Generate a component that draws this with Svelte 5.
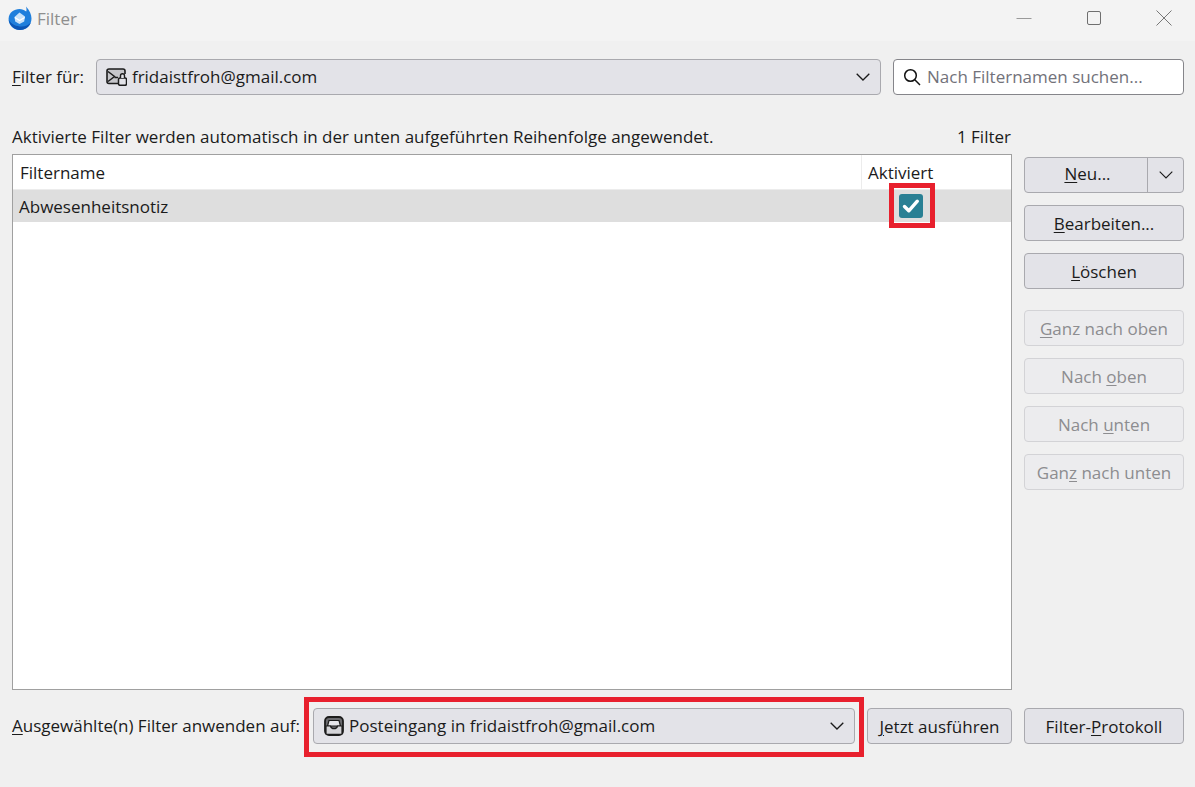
<script>
  const sideTop = [
    { pre: "", key: "B", post: "earbeiten..." },
    { pre: "", key: "L", post: "öschen" },
  ];
  const sideMove = [
    { pre: "", key: "G", post: "anz nach oben" },
    { pre: "Nach ", key: "o", post: "ben" },
    { pre: "Nach ", key: "u", post: "nten" },
    { pre: "Gan", key: "z", post: " nach unten" },
  ];
</script>

<div class="window">
  <header class="titlebar">
    <svg class="logo" viewBox="0 0 24 24" width="24" height="24">
      <path fill="#1f7fdc" d="M11.500 3C6 3 1 6.500.6 12.500.2 18.500 5 24 12 24c6.500 0 11.500-5 11.500-11.500 0-4-1.800-8-5.500-12 .6 2 .7 3.600.2 5C16.300 4 14 3 11.500 3z"/>
      <path fill="#0b55b5" d="M.8 14c.8 5.500 5.300 10 11.200 10 5 0 9.400-3 10.800-7.500-2.300 2.600-5.500 4-9.300 4C8.500 20.500 3.500 18.500.8 14z"/>
      <path fill="#c9e3fa" d="M6.500 11 11.500 6.500l5.500 4-.8 5L11.500 18l-4.300-2.500z"/>
      <path fill="none" stroke="#fff" stroke-width="1.300" d="M6.800 11.500l4.700 3 5.200-3"/>
    </svg>
    <span class="title">Filter</span>
    <div class="controls">
      <svg viewBox="0 0 16 16" width="16" height="16"><path d="M.5 8.500h15" stroke="#9a9a9a" fill="none"/></svg>
      <svg viewBox="0 0 16 16" width="16" height="16"><rect x="1.500" y="1.500" width="13" height="13" rx="1.500" stroke="#6f6f6f" fill="none"/></svg>
      <svg viewBox="0 0 16 16" width="16" height="16"><path d="M.5.500l15 15M15.500.500l-15 15" stroke="#777" fill="none"/></svg>
    </div>
  </header>

  <div class="top-row">
    <span class="label"><u>F</u>ilter für:</span>
    <div class="select account">
      <svg class="row-icon" viewBox="0 0 21 18" width="21" height="18">
        <path d="M12 15.500H3A2 2 0 0 1 1 13.500V3A2 2 0 0 1 3 1h14A2 2 0 0 1 19 3v3" fill="#c6c6ca" stroke="#1c1c1c" stroke-width="1.600"/>
        <path d="M2 3.500l6.500 5L2 13.500" fill="none" stroke="#1c1c1c" stroke-width="1.500"/>
        <path d="M8.500 9.500h3.500" stroke="#1c1c1c" stroke-width="1.500"/>
        <rect x="12.500" y="10" width="8" height="7.300" rx="1.500" fill="#e3e3e8" stroke="#1c1c1c" stroke-width="1.500"/>
        <path d="M14.500 10V7.800a2 2 0 0 1 4 0V10" fill="#e3e3e8" stroke="#1c1c1c" stroke-width="1.400"/>
      </svg>
      <span class="grow">fridaistfroh@gmail.com</span>
      <svg class="chev" viewBox="0 0 14 8" width="14" height="8"><path d="M.7.700 7 7l6.300-6.300" fill="none" stroke="#1a1a1a" stroke-width="1.300"/></svg>
    </div>
    <div class="search">
      <svg viewBox="0 0 18 18" width="18" height="18"><circle cx="7.500" cy="7.500" r="5.800" fill="none" stroke="#111" stroke-width="1.500"/><path d="M11.800 11.800 17 17" stroke="#111" stroke-width="1.500"/></svg>
      <span class="placeholder">Nach Filternamen suchen...</span>
    </div>
  </div>

  <div class="info-row">
    <span>Aktivierte Filter werden automatisch in der unten aufgeführten Reihenfolge angewendet.</span>
    <span>1 Filter</span>
  </div>

  <div class="main">
    <div class="tree">
      <div class="tree-head">
        <div class="col-name">Filtername</div>
        <div class="col-on">Aktiviert</div>
      </div>
      <div class="tree-row">
        <div class="name">Abwesenheitsnotiz</div>
        <div class="check-cell">
          <span class="checkbox">
            <svg viewBox="0 0 24 24" width="24" height="24"><path d="M5.500 12.500l4.300 4.300 8.500-9.600" fill="none" stroke="#fff" stroke-width="3.400" stroke-linecap="round" stroke-linejoin="round"/></svg>
          </span>
          <span class="mark mark-check"></span>
        </div>
      </div>
    </div>

    <div class="side">
      <div class="split btn">
        <span class="split-main"><u>N</u>eu...</span>
        <span class="split-arrow">
          <svg viewBox="0 0 14 8" width="14" height="8"><path d="M.7.700 7 7l6.300-6.300" fill="none" stroke="#1a1a1a" stroke-width="1.100"/></svg>
        </span>
      </div>
      {#each sideTop as b}
        <div class="btn">{b.pre}<u>{b.key}</u>{b.post}</div>
      {/each}
      {#each sideMove as b, i}
        <div class="btn disabled" class:first-move={i === 0}>{b.pre}<u>{b.key}</u>{b.post}</div>
      {/each}
    </div>
  </div>

  <div class="bottom-row">
    <span class="label"><u>A</u>usgewählte(n) Filter anwenden auf:</span>
    <div class="select folder">
      <svg class="row-icon" viewBox="0 0 20 20" width="20" height="20">
        <rect x="1" y="1" width="18" height="18" rx="4" fill="#6a6a6e" stroke="#1c1c1c" stroke-width="1.800"/>
        <path d="M3.500 10l1.500-5.500h10l1.500 5.500z" fill="#e6e6ea" stroke="#1c1c1c" stroke-width="1.200"/>
        <path d="M2 10h4.500c.5 2 1.500 2.700 3.500 2.700s3-.7 3.500-2.700H18v7.500a.8.800 0 0 1-1 .8H3a.8.800 0 0 1-1-.8z" fill="#d4d4d8" stroke="#1c1c1c" stroke-width="1.200"/>
      </svg>
      <span class="grow">Posteingang in fridaistfroh@gmail.com</span>
      <svg class="chev" viewBox="0 0 14 8" width="14" height="8"><path d="M.7.700 7 7l6.300-6.300" fill="none" stroke="#1a1a1a" stroke-width="1.300"/></svg>
      <span class="mark mark-folder"></span>
    </div>
    <div class="btn run"><u>J</u>etzt ausführen</div>
    <div class="btn log">Filter-<u>P</u>rotokoll</div>
  </div>
</div>

<style>
  :global(body) {
    background: #f0f0f0;
  }
  .window {
    height: 787px;
    width: 1195px;
    overflow: hidden;
    font-family: "Open Sans", "Noto Sans", sans-serif;
    font-size: 17px;
    color: #1b1b1b;
    background: #f0f0f0;
  }
  u {
    text-underline-offset: 2px;
    text-decoration-thickness: 1px;
  }
  .titlebar {
    height: 41px;
    background: #f3f3f3;
    display: flex;
    align-items: center;
    padding-left: 8px;
  }
  .logo {
    margin-top: -5px;
  }
  .title {
    margin-left: 5px;
    margin-top: -5px;
    color: #8e8e8e;
  }
  .controls {
    margin-left: auto;
    display: flex;
    gap: 54px;
    padding-right: 23px;
    margin-top: -5px;
  }
  .top-row {
    display: flex;
    align-items: center;
    margin-top: 18px;
    padding: 0 11px 0 12px;
  }
  .label {
    white-space: nowrap;
    margin-top: -1px;
  }
  .select {
    position: relative;
    height: 36px;
    box-sizing: border-box;
    display: flex;
    align-items: center;
    background: #e3e3e8;
    border: 1px solid #a9a9ae;
    border-radius: 4px;
    padding: 0 10px 0 9px;
    flex: 1;
    margin-left: 12px;
  }
  .folder {
    margin-left: 13px;
    padding-left: 10px;
  }
  .row-icon {
    margin-right: 5px;
    flex: none;
  }
  .grow {
    flex: 1;
    margin-top: -1px;
  }
  .search {
    width: 291px;
    height: 36px;
    margin-left: 12px;
    box-sizing: border-box;
    border: 1px solid #85858a;
    border-radius: 4px;
    background: #fff;
    display: flex;
    align-items: center;
    gap: 6px;
    padding-left: 9px;
    color: #72727a;
  }
  .placeholder {
    margin-top: -1px;
  }
  .info-row {
    display: flex;
    justify-content: space-between;
    width: 999px;
    margin-top: 30px;
    padding-left: 12px;
    line-height: 24px;
  }
  .main {
    display: flex;
    margin-top: 5px;
    padding-left: 12px;
  }
  .tree {
    width: 1000px;
    height: 536px;
    box-sizing: border-box;
    border: 1px solid #a0a0a0;
    background: #fff;
  }
  .tree-head {
    display: flex;
    height: 35px;
    align-items: center;
    border-bottom: 1px solid #ececec;
    box-sizing: border-box;
  }
  .col-name {
    flex: 1;
    padding-left: 7px;
  }
  .col-on {
    width: 150px;
    height: 100%;
    box-sizing: border-box;
    display: flex;
    align-items: center;
    padding-left: 6px;
    border-left: 1px solid #ececec;
  }
  .tree-row {
    height: 32px;
    background: #dedede;
    display: flex;
    align-items: center;
  }
  .name {
    flex: 1;
    padding-left: 6px;
  }
  .check-cell {
    position: relative;
    width: 150px;
    height: 100%;
    display: flex;
    align-items: center;
    padding-left: 38px;
    box-sizing: border-box;
  }
  .checkbox {
    width: 24px;
    height: 24px;
    border-radius: 3px;
    background: #2a8094;
    display: block;
  }
  .checkbox svg {
    display: block;
  }
  .mark {
    position: absolute;
    border: 5px solid #e8202d;
    box-sizing: border-box;
    pointer-events: none;
  }
  .mark-check {
    left: 28px;
    top: -7px;
    width: 46px;
    height: 45px;
  }
  .mark-folder {
    left: -10px;
    top: -12px;
    width: 560px;
    height: 60px;
  }
  .side {
    width: 160px;
    margin-left: 12px;
    padding-top: 3px;
    display: flex;
    flex-direction: column;
    gap: 12px;
  }
  .first-move {
    margin-top: 9px;
  }
  .btn {
    height: 36px;
    box-sizing: border-box;
    border: 1px solid #a9a9ae;
    border-radius: 4px;
    background: #e3e3e8;
    display: flex;
    align-items: center;
    justify-content: center;
    white-space: pre;
  }
  .disabled {
    background: #ececee;
    border-color: #d3d3d6;
    color: #8d8d90;
  }
  .split {
    justify-content: flex-start;
  }
  .split-main {
    flex: 1;
    text-align: center;
    padding-left: 3px;
    margin-top: -3px;
  }
  .split-arrow {
    width: 35px;
    height: 100%;
    border-left: 1px solid #a9a9ae;
    display: flex;
    align-items: center;
    justify-content: center;
  }
  .bottom-row {
    display: flex;
    align-items: center;
    margin-top: 18px;
    padding: 0 11px 0 12px;
  }
  .run {
    width: 145px;
    margin-left: 12px;
  }
  .log {
    width: 160px;
    margin-left: 12px;
  }
</style>
